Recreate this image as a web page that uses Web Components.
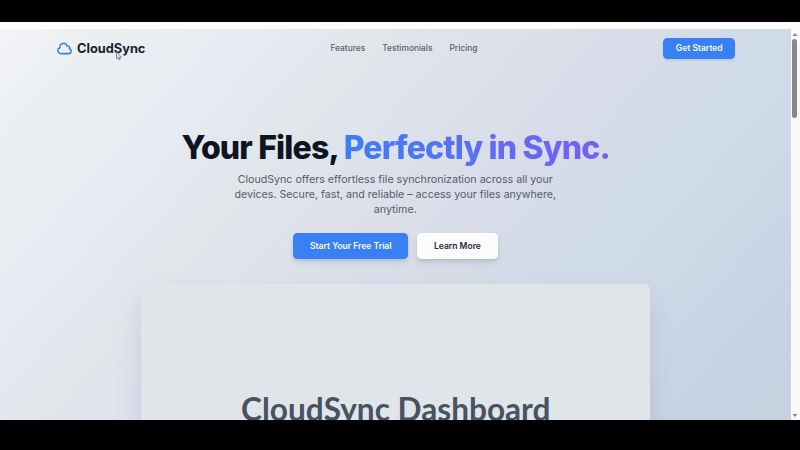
<!DOCTYPE html>
<html lang="en">
<head>
<meta charset="utf-8">
<title>CloudSync</title>
<style>
html,body{margin:0;height:100%;overflow:hidden;background:#000}
body{font-family:Inter,"Liberation Sans",sans-serif}
</style>
</head>
<body>
<cloud-window>
  <site-header>
    <cloud-brand slot="brand">CloudSync</cloud-brand>
    <nav-link>Features</nav-link><nav-link>Testimonials</nav-link><nav-link>Pricing</nav-link>
    <action-button slot="action" kind="compact">Get Started</action-button>
  </site-header>
  <hero-section>
    <span slot="title">Your Files,</span>
    <span slot="accent">Perfectly in Sync.</span>
    <span slot="copy">CloudSync offers effortless file synchronization across all your<br>devices. Secure, fast, and reliable – access your files anywhere,<br>anytime.</span>
    <action-button>Start Your Free Trial</action-button>
    <action-button kind="light">Learn More</action-button>
  </hero-section>
  <dashboard-preview>CloudSync Dashboard</dashboard-preview>
</cloud-window>
<mouse-pointer></mouse-pointer>
<script>
const element = (name, markup) => customElements.define(name, class extends HTMLElement {
  constructor() {
    super();
    this.attachShadow({mode: 'open'}).innerHTML = markup;
  }
});

element('cloud-window', `<style>
:host{display:flex;flex-direction:column;box-sizing:border-box;height:450px;padding:22px 0 30px;background:#000}
.strip{height:7px;flex:none;background:#fcfcfc}
.view{display:flex;height:391px;flex:none}
main{width:790.5px;flex:none;overflow:hidden;background:linear-gradient(132deg,#f2f3f6 0,#ebeff2 10%,#e6ecf1 22%,#e3e8ee 29%,#e0e5e9 35%,#dfe3ec 40%,#dbdfea 48%,#d8dce8 57%,#d1dce8 65%,#cdd9e7 78%,#c7d3e2 89%,#c6d1e0 100%)}
</style><div class="strip"></div><div class="view"><main><slot></slot></main><scroll-rail></scroll-rail></div>`);

element('scroll-rail', `<style>
:host{display:flex;flex:1;flex-direction:column;align-items:center;box-sizing:border-box;background:#fafafb;padding:4px 1px 3px 0}
svg{width:6px;height:3px;flex:none;fill:#858585}
.thumb{width:5px;height:79px;margin-top:3px;border-radius:3px;background:#888}
.space{flex:1}
</style><svg viewBox="0 0 6 3"><path d="M.5 3 3 0l2.500 3z"/></svg><div class="thumb"></div><div class="space"></div><svg viewBox="0 0 6 3"><path d="M.5 0h5L3 3z"/></svg>`);

element('site-header', `<style>
:host{display:flex;justify-content:space-between;align-items:center;height:38.500px;padding:0 55.500px 0 57px}
nav{display:flex;gap:17px}
</style><slot name="brand"></slot><nav><slot></slot></nav><div><slot name="action"></slot></div>`);

element('cloud-brand', `<style>
:host{display:flex;align-items:center;gap:5px;color:#171e2d;font:700 12.800px/17px Inter,sans-serif}
svg{width:15px;height:15px;flex:none;overflow:visible;fill:none;stroke:#3b82e8;stroke-width:2.300;stroke-linecap:round;stroke-linejoin:round}
</style><svg viewBox="1 1 22 22"><path d="M2.250 15a4.500 4.500 0 0 0 4.500 4.500H18a3.750 3.750 0 0 0 1.332-7.257 3 3 0 0 0-3.758-3.848 5.250 5.250 0 0 0-10.233 2.330A4.502 4.502 0 0 0 2.250 15Z"/></svg><span><slot></slot></span>`);

element('nav-link', `<style>
:host{display:block;color:#566071;font:500 8.400px/13px Inter,sans-serif;white-space:nowrap;padding-top:1px}
</style><slot></slot>`);

element('action-button', `<style>
:host{display:flex;align-items:center;justify-content:center;box-sizing:border-box;height:26px;padding:1px 16.800px 0 17.200px;border-radius:4.300px;background:#3980f4;color:#f8fbff;font:600 8.530px/13px Inter,sans-serif;white-space:nowrap;box-shadow:0 4px 7px -1px #4b587030,0 2px 3px -1px #4b587025}
:host([kind=compact]){height:21.500px;padding:1px 12.300px 0 13.300px;box-shadow:0 2px 3px -1px #4b587038}
:host([kind=light]){background:#fcfcfd;color:#202939}
</style><slot></slot>`);

element('hero-section', `<style>
:host{display:flex;flex-direction:column;align-items:center;padding-top:64.500px}
h1{margin:0;color:#0e1422;font:800 32px/32px Inter,sans-serif;letter-spacing:-.026em;white-space:nowrap;padding-left:1px}
.accent{color:transparent;background:linear-gradient(90deg,#3b7ff5,#7d5df0);background-clip:text;-webkit-background-clip:text;padding-bottom:4px}
p{margin:8px 0 0;color:#525d6c;text-align:center;font:400 10.670px/15px Inter,sans-serif}
.actions{display:flex;gap:8.500px;margin-top:16px}
</style><h1><slot name="title"></slot> <span class="accent"><slot name="accent"></slot></span></h1><p><slot name="copy"></slot></p><div class="actions"><slot></slot></div>`);

element('dashboard-preview', `<style>
:host{display:flex;box-sizing:border-box;width:509.500px;height:250px;margin:25px auto 0;padding-left:1px;align-items:center;justify-content:center;border-radius:6px;background:#e0e5e9;color:#475263;font:700 31.600px/40px Lato,sans-serif;box-shadow:0 13px 27px -5px #59609040}
</style><slot></slot>`);

element('mouse-pointer', `<style>
:host{position:absolute;left:116px;top:51px;width:6px;height:10px}
svg{display:block;width:100%;height:100%}
</style><svg viewBox="0 0 6 10"><path d="M.5.7v7l1.500-1.300 1.100 2.500 1.100-.5-1-2.300h2z" fill="#eef1f4" stroke="#535861" stroke-width=".7"/></svg>`);
</script>
</body>
</html>
